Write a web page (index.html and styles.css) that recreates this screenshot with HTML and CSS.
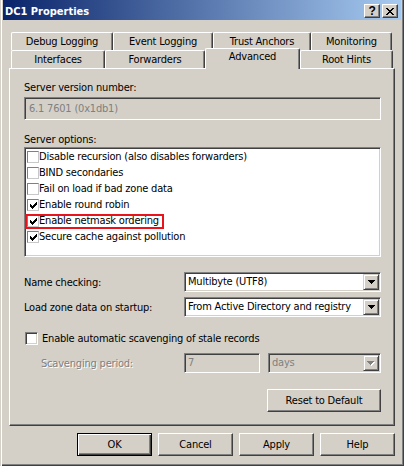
FILE: index.html
```html
<!DOCTYPE html>
<html>
<head>
<meta charset="utf-8">
<title>DC1 Properties</title>
<link rel="stylesheet" href="styles.css">
</head>
<body>
<div class="window">
  <div class="titlebar">
    <span class="title">DC1 Properties</span>
    <div class="caption-buttons">
      <span class="cap-btn"><span class="q">?</span></span>
      <span class="cap-btn"><svg width="8" height="7" viewBox="0 0 8 7"><path d="M0 0h2v1h-2zM6 0h2v1h-2zM1 1h2v1h-2zM5 1h2v1h-2zM2 2h4v1h-4zM3 3h2v1h-2zM2 4h4v1h-4zM1 5h2v1h-2zM5 5h2v1h-2zM0 6h2v1h-2zM6 6h2v1h-2z" fill="#000"/></svg></span>
    </div>
  </div>
  <div class="client">
    <div class="tabs">
      <div class="tab-row">
        <div class="tab t-debug">Debug Logging</div>
        <div class="tab t-event">Event Logging</div>
        <div class="tab t-trust">Trust Anchors</div>
        <div class="tab t-mon">Monitoring</div>
      </div>
      <div class="tab-row">
        <div class="tab t-if">Interfaces</div>
        <div class="tab t-fwd">Forwarders</div>
        <div class="tab t-adv selected">Advanced</div>
        <div class="tab t-root">Root Hints</div>
      </div>
    </div>
    <div class="panel">
      <div class="label">Server version number:</div>
      <div class="edit disabled version">6.1 7601 (0x1db1)</div>
      <div class="label options-label">Server options:</div>
      <div class="listbox">
        <div class="item"><span class="lcheck"></span>Disable recursion (also disables forwarders)</div>
        <div class="item"><span class="lcheck"></span>BIND secondaries</div>
        <div class="item"><span class="lcheck"></span>Fail on load if bad zone data</div>
        <div class="item"><span class="lcheck"><svg width="7" height="7" viewBox="0 0 7 7"><path d="M6 0h1v1h-1zM5 1h2v1h-2zM0 2h1v1h-1zM4 2h3v1h-3zM0 3h2v1h-2zM3 3h3v1h-3zM0 4h5v1h-5zM1 5h3v1h-3zM2 6h1v1h-1z" fill="#000"/></svg></span>Enable round robin</div>
        <div class="item hl"><span class="lcheck"><svg width="7" height="7" viewBox="0 0 7 7"><path d="M6 0h1v1h-1zM5 1h2v1h-2zM0 2h1v1h-1zM4 2h3v1h-3zM0 3h2v1h-2zM3 3h3v1h-3zM0 4h5v1h-5zM1 5h3v1h-3zM2 6h1v1h-1z" fill="#000"/></svg></span>Enable netmask ordering<span class="hl-box"></span></div>
        <div class="item"><span class="lcheck"><svg width="7" height="7" viewBox="0 0 7 7"><path d="M6 0h1v1h-1zM5 1h2v1h-2zM0 2h1v1h-1zM4 2h3v1h-3zM0 3h2v1h-2zM3 3h3v1h-3zM0 4h5v1h-5zM1 5h3v1h-3zM2 6h1v1h-1z" fill="#000"/></svg></span>Secure cache against pollution</div>
      </div>
      <div class="field-row name-row">
        <span class="field-label">Name checking:</span>
        <div class="combo wide"><span class="combo-text">Multibyte (UTF8)</span><span class="drop"><svg width="7" height="4" viewBox="0 0 7 4"><path d="M0 0h7v1h-1v1h-1v1h-1v1h-1v-1h-1v-1h-1v-1h-1z" fill="#000"/></svg></span></div>
      </div>
      <div class="field-row load-row">
        <span class="field-label">Load zone data on startup:</span>
        <div class="combo wide"><span class="combo-text">From Active Directory and registry</span><span class="drop"><svg width="7" height="4" viewBox="0 0 7 4"><path d="M0 0h7v1h-1v1h-1v1h-1v1h-1v-1h-1v-1h-1v-1h-1z" fill="#000"/></svg></span></div>
      </div>
      <div class="check-row">
        <span class="checkbox"></span>
        <span>Enable automatic scavenging of stale records</span>
      </div>
      <div class="scav-row">
        <span class="field-label disabled-text scav-label">Scavenging period:</span>
        <div class="edit disabled period">7</div>
        <div class="combo disabled days"><span class="combo-text">days</span><span class="drop"><svg width="8" height="5" viewBox="0 0 8 5"><path d="M1 1h7v1h-1v1h-1v1h-1v1h-1v-1h-1v-1h-1v-1h-1z" fill="#fff"/><path d="M0 0h7v1h-1v1h-1v1h-1v1h-1v-1h-1v-1h-1v-1h-1z" fill="#808080"/></svg></span></div>
      </div>
      <div class="reset-row">
        <span class="btn reset">Reset to Default</span>
      </div>
    </div>
    <div class="buttons">
      <span class="btn default">OK</span>
      <span class="btn">Cancel</span>
      <span class="btn">Apply</span>
      <span class="btn">Help</span>
    </div>
  </div>
</div>
</body>
</html>
```

FILE: styles.css
```css
html, body {
  margin: 0;
  padding: 0;
  background: #d4d0c8;
}

body {
  font-family: "DejaVu Sans Condensed", "Liberation Sans", Arial, sans-serif;
  font-size: 11px;
  letter-spacing: -0.2px;
  color: #000;
}

.window {
  width: 404px;
  height: 466px;
  box-sizing: border-box;
  padding: 0 3px 3px 3px;
  background: #d4d0c8;
  box-shadow: inset 1px 0 0 #d4d0c8, inset 2px 0 0 #fff, inset -1px -1px 0 #404040, inset -2px -2px 0 #808080;
}

.titlebar {
  height: 20px;
  display: flex;
  align-items: flex-start;
  justify-content: space-between;
  background: linear-gradient(to right, #0a246a, #a6caf0);
  padding: 0 3px 0 2px;
}

.title {
  color: #fff;
  font-weight: bold;
  font-size: 11px;
  letter-spacing: 0;
  line-height: 14px;
  margin-top: 5px;
}

.caption-buttons {
  display: flex;
  gap: 2px;
  margin-top: 4px;
}

.cap-btn {
  width: 16px;
  height: 14px;
  box-sizing: border-box;
  background: #d4d0c8;
  border: 1px solid;
  border-color: #fff #404040 #404040 #fff;
  box-shadow: inset -1px -1px 0 #808080;
  display: flex;
  align-items: center;
  justify-content: center;
}

.cap-btn svg {
  display: block;
}

.q {
  font-family: "Liberation Sans", Arial, sans-serif;
  font-weight: bold;
  font-size: 12px;
  line-height: 12px;
}

.client {
  padding: 12px 6px 0 6px;
}

.tabs {
  padding-left: 2px;
}

.tab-row {
  display: flex;
  height: 18px;
  align-items: flex-start;
}

.tab {
  height: 18px;
  box-sizing: border-box;
  border-left: 1px solid #fff;
  border-top: 1px solid #fff;
  border-right: 1px solid #404040;
  box-shadow: inset -1px 0 0 #808080;
  border-top-left-radius: 2px;
  border-top-right-radius: 2px;
  text-align: center;
  line-height: 17px;
  white-space: nowrap;
  background: #d4d0c8;
}

.t-debug { width: 102px; }
.t-event { width: 100px; }
.t-trust { width: 98px; }
.t-mon { width: 81px; }
.t-if { width: 94px; }
.t-fwd { width: 100px; }
.t-adv { width: 95px; }
.t-root { width: 93px; }

.tab.selected {
  position: relative;
  z-index: 1;
  height: 21px;
  margin-top: -2px;
  line-height: 16px;
}

.panel {
  height: 358px;
  box-sizing: border-box;
  border-left: 1px solid #fff;
  border-top: 1px solid #fff;
  border-right: 1px solid #404040;
  border-bottom: 1px solid #404040;
  box-shadow: inset -1px -1px 0 #808080;
  padding: 12px 13px 0 14px;
  display: flex;
  flex-direction: column;
}

.label {
  line-height: 13px;
}

.options-label {
  margin-top: 13px;
}

.edit {
  box-sizing: border-box;
  border: 1px solid;
  border-color: #808080 #fff #fff #808080;
  box-shadow: inset 1px 1px 0 #404040, inset -1px -1px 0 #d4d0c8;
  background: #fff;
  padding-left: 4px;
  white-space: nowrap;
}

.edit.disabled {
  background: #d4d0c8;
  color: #808080;
}

.version {
  margin-top: 3px;
  height: 23px;
  line-height: 21px;
}

.listbox {
  margin-top: 1px;
  height: 110px;
  box-sizing: border-box;
  border: 1px solid;
  border-color: #808080 #fff #fff #808080;
  box-shadow: inset 1px 1px 0 #404040, inset -1px -1px 0 #d4d0c8;
  background: #fff;
  padding: 1px 1px 0 2px;
}

.item {
  height: 16px;
  line-height: 16px;
  display: flex;
  align-items: center;
  white-space: nowrap;
}

.lcheck {
  width: 12px;
  height: 12px;
  box-sizing: border-box;
  border: 1px solid;
  border-color: #808080 #c8c8c8 #c8c8c8 #808080;
  background: #fff;
  display: flex;
  align-items: center;
  justify-content: center;
  flex: none;
}

.lcheck svg {
  display: block;
}

.item.hl {
  position: relative;
}

.hl-box {
  position: absolute;
  left: -2px;
  top: 1px;
  width: 139px;
  height: 15px;
  box-sizing: border-box;
  border: 2px solid #e8131b;
}

.field-row {
  display: flex;
  align-items: center;
  height: 20px;
}

.name-row {
  margin-top: 15px;
}

.load-row {
  margin-top: 5px;
}

.field-label {
  width: 160px;
  flex: none;
  white-space: nowrap;
}

.combo {
  height: 20px;
  box-sizing: border-box;
  border: 1px solid;
  border-color: #808080 #fff #fff #808080;
  box-shadow: inset 1px 1px 0 #404040, inset -1px -1px 0 #d4d0c8;
  background: #fff;
  padding: 1px;
  display: flex;
  align-items: stretch;
}

.combo.wide {
  width: 197px;
}

.combo-text {
  flex: 1;
  padding-left: 2px;
  line-height: 16px;
  white-space: nowrap;
  overflow: hidden;
}

.drop {
  width: 16px;
  flex: none;
  box-sizing: border-box;
  background: #d4d0c8;
  border: 1px solid;
  border-color: #d4d0c8 #404040 #404040 #d4d0c8;
  box-shadow: inset 1px 1px 0 #fff, inset -1px -1px 0 #808080;
  display: flex;
  align-items: center;
  justify-content: center;
}

.drop svg {
  display: block;
}

.combo.disabled {
  background: #d4d0c8;
  color: #808080;
}

.check-row {
  margin-top: 15px;
  height: 13px;
  display: flex;
  align-items: center;
  line-height: 13px;
  white-space: nowrap;
}

.checkbox {
  width: 13px;
  height: 13px;
  box-sizing: border-box;
  border: 1px solid;
  border-color: #808080 #fff #fff #808080;
  box-shadow: inset 1px 1px 0 #404040, inset -1px -1px 0 #d4d0c8;
  background: #fff;
  margin-left: 1px;
  margin-right: 4px;
  flex: none;
}

.scav-row {
  margin-top: 8px;
  height: 20px;
  display: flex;
  align-items: center;
}

.scav-label {
  width: 143px;
  padding-left: 17px;
}

.disabled-text {
  color: #808080;
  text-shadow: 1px 1px 0 #fff;
}

.period {
  width: 76px;
  height: 20px;
  line-height: 18px;
  padding-left: 3px;
}

.days {
  width: 113px;
  margin-left: 8px;
}

.reset-row {
  margin-top: 16px;
  display: flex;
  justify-content: flex-end;
}

.btn {
  width: 75px;
  height: 23px;
  box-sizing: border-box;
  border: 1px solid;
  border-color: #fff #404040 #404040 #fff;
  box-shadow: inset -1px -1px 0 #808080;
  background: #d4d0c8;
  display: flex;
  align-items: center;
  justify-content: center;
  white-space: nowrap;
}

.btn.reset {
  width: 114px;
}

.btn.default {
  border: 1px solid #000;
  box-shadow: inset 1px 1px 0 #fff, inset -1px -1px 0 #404040, inset -2px -2px 0 #808080;
}

.buttons {
  margin-top: 7px;
  display: flex;
  justify-content: flex-end;
  gap: 6px;
}
```
